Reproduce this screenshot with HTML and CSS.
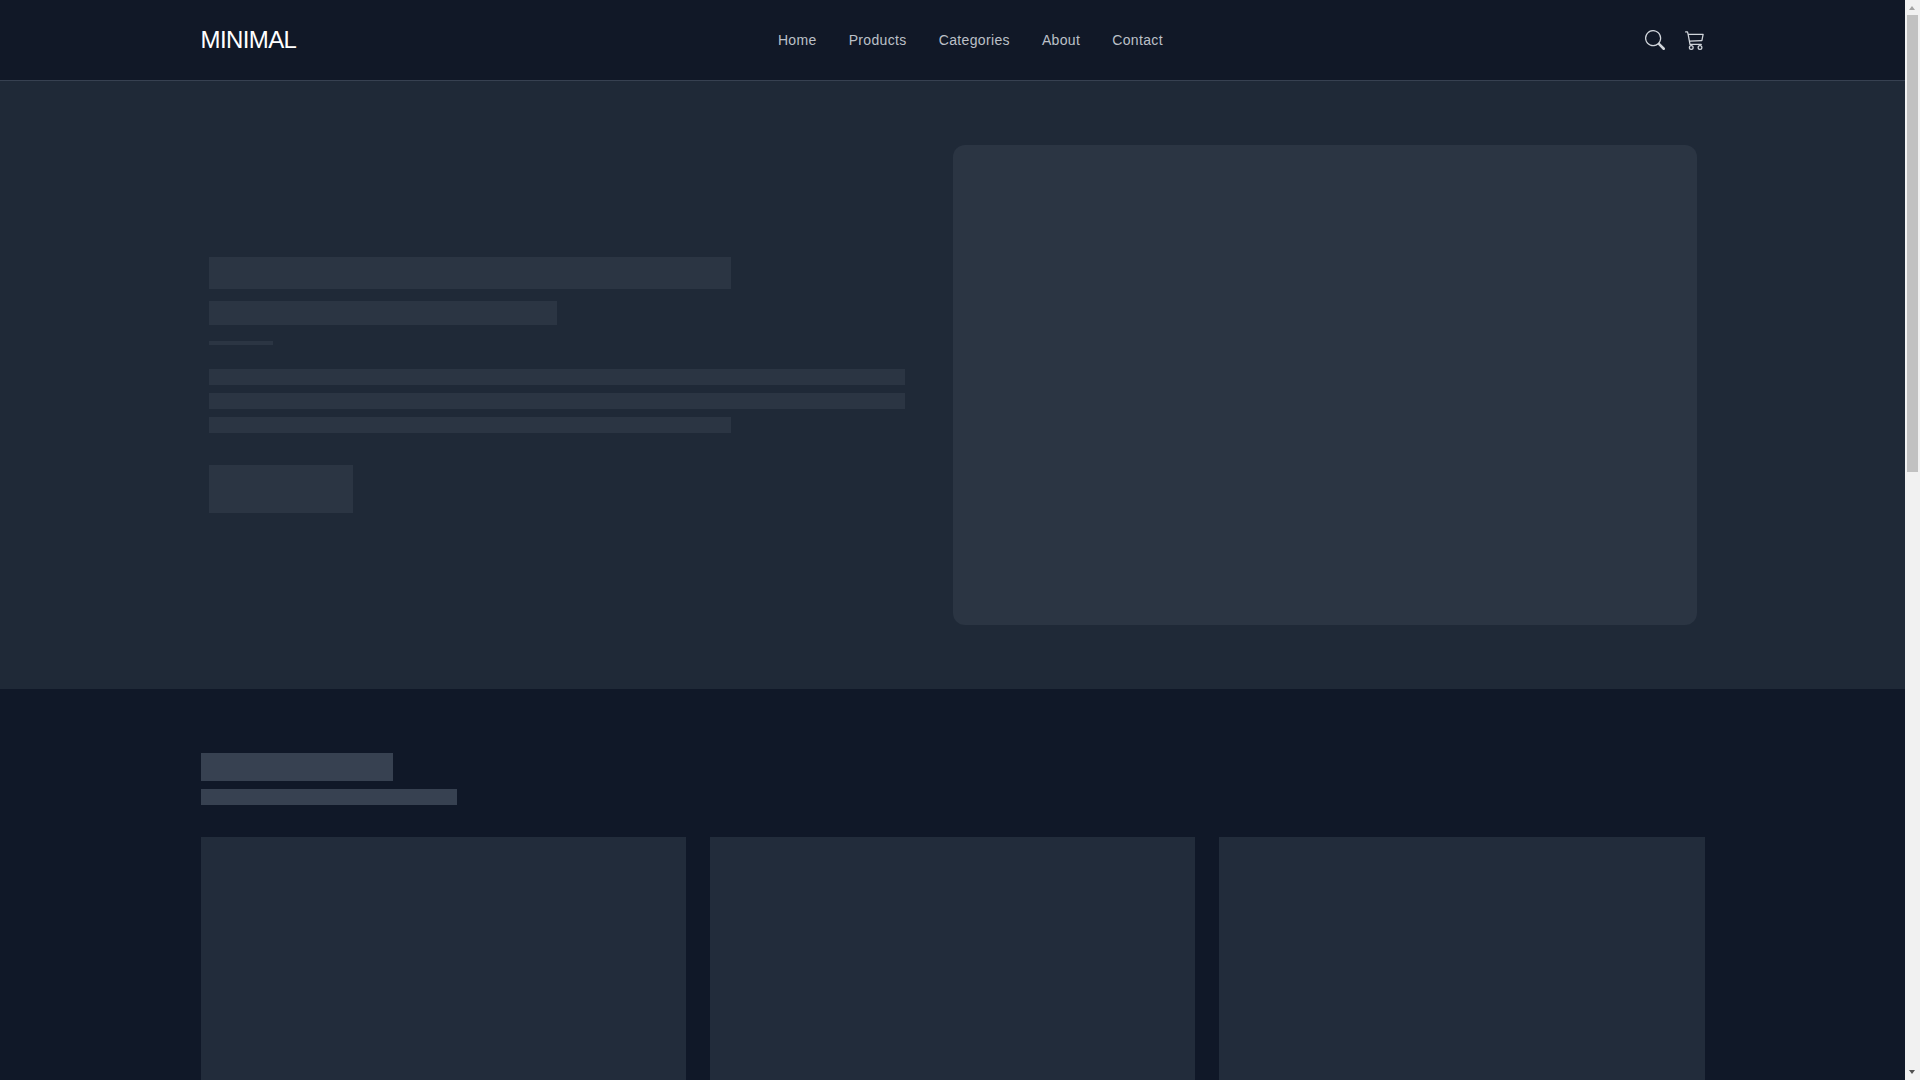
FILE: index.html
```html
<!DOCTYPE html>
<html lang="en">
<head>
  <meta charset="UTF-8" />
  <meta name="viewport" content="width=device-width, initial-scale=1.0"/>
  <title>Minimal</title>
  <link rel="stylesheet" href="styles.css">
</head>
<body>
  <header class="site-header">
    <div class="container header-row">
      <a class="logo" href="#">MINIMAL</a>
      <nav class="main-nav">
        <a href="#">Home</a>
        <a href="#">Products</a>
        <a href="#">Categories</a>
        <a href="#">About</a>
        <a href="#">Contact</a>
      </nav>
      <div class="header-icons">
        <svg class="icon" viewBox="0 0 16 16" fill="currentColor" aria-label="Search">
          <path d="M11.742 10.344a6.5 6.5 0 1 0-1.397 1.398h-.001c.03.04.062.078.098.115l3.85 3.85a1 1 0 0 0 1.415-1.414l-3.85-3.85a1.007 1.007 0 0 0-.115-.1zM12 6.5a5.5 5.5 0 1 1-11 0 5.5 5.5 0 0 1 11 0z"/>
        </svg>
        <svg class="icon" viewBox="0 0 16 16" fill="currentColor" aria-label="Cart">
          <path d="M0 1.5A.5.5 0 0 1 .5 1H2a.5.5 0 0 1 .485.379L2.89 3H14.5a.5.5 0 0 1 .49.598l-1 5a.5.5 0 0 1-.465.401l-9.397.472L4.415 11H13a.5.5 0 0 1 0 1H4a.5.5 0 0 1-.491-.408L2.01 3.607 1.61 2H.5a.5.5 0 0 1-.5-.5zM3.102 4l.84 4.479 9.144-.459L13.89 4H3.102zM5 12a2 2 0 1 0 0 4 2 2 0 0 0 0-4zm7 0a2 2 0 1 0 0 4 2 2 0 0 0 0-4zm-7 1a1 1 0 1 1 0 2 1 1 0 0 1 0-2zm7 0a1 1 0 1 1 0 2 1 1 0 0 1 0-2z"/>
        </svg>
      </div>
    </div>
  </header>

  <section class="hero">
    <div class="container">
      <div class="hero-grid">
        <div class="hero-text">
          <div class="skel hero-title"></div>
          <div class="skel hero-subtitle"></div>
          <div class="skel hero-rule"></div>
          <div class="skel hero-line"></div>
          <div class="skel hero-line"></div>
          <div class="skel hero-line short"></div>
          <div class="skel hero-button"></div>
        </div>
        <div class="skel hero-image"></div>
      </div>
    </div>
  </section>

  <section class="products">
    <div class="container">
      <div class="skel section-title"></div>
      <div class="skel section-subtitle"></div>
      <div class="card-grid">
        <div class="card"></div>
        <div class="card"></div>
        <div class="card"></div>
        <div class="card"></div>
        <div class="card"></div>
        <div class="card"></div>
      </div>
    </div>
  </section>

  <section class="newsletter">
    <div class="container">
      <div class="skel section-title"></div>
      <div class="skel section-subtitle"></div>
    </div>
  </section>

  <footer class="site-footer"></footer>

  <div class="scrollbar">
    <span class="scroll-arrow up"></span>
    <span class="scroll-thumb"></span>
    <span class="scroll-arrow down"></span>
  </div>
</body>
</html>
```

FILE: styles.css
```css
body { margin: 0; padding-right: 15px; background-color: #111827; font-family: "Liberation Sans", Arial, sans-serif; }
.container { max-width: 1504px; margin: 0 auto; padding: 0 16px; }

.site-header { background-color: #111827; border-bottom: 1px solid #374151; }
.header-row { display: flex; justify-content: space-between; align-items: center; height: 80px; }
.logo { color: #fff; font-size: 24px; letter-spacing: -0.6px; text-decoration: none; }
.main-nav { display: flex; gap: 32px; }
.main-nav a { color: #bcc0c8; font-size: 14px; letter-spacing: 0.35px; text-decoration: none; }
.header-icons { display: flex; gap: 20px; color: #d1d5db; }
.icon { display: block; width: 20px; height: 20px; }

.skel { background-color: #2b3543; }

.hero { background-color: #1f2937; padding: 64px 0; }
.hero-grid { display: grid; grid-template-columns: 1fr 1fr; align-items: center; padding: 0 8px; }
.hero-text { padding-right: 48px; }
.hero-title { width: 75%; height: 32px; margin-bottom: 12px; }
.hero-subtitle { width: 50%; height: 24px; margin-bottom: 16px; }
.hero-rule { width: 64px; height: 4px; margin-bottom: 24px; }
.hero-line { height: 16px; margin-bottom: 8px; }
.hero-line.short { width: 75%; margin-bottom: 32px; }
.hero-button { width: 144px; height: 48px; }
.hero-image { height: 480px; border-radius: 12px; }

.products { background-color: #101828; padding: 64px 0; }
.products .skel, .newsletter .skel { background-color: #374151; }
.section-title { width: 192px; height: 28px; margin-bottom: 8px; }
.section-subtitle { width: 256px; height: 16px; }
.card-grid { display: grid; grid-template-columns: repeat(3, 1fr); gap: 24px; margin-top: 32px; }
.card { height: 420px; background-color: #222c3b; }

.newsletter { background-color: #1f2937; padding: 64px 0; }
.site-footer { height: 260px; background-color: #111827; border-top: 1px solid #374151; }

/* window scrollbar from the screenshot, the headless browser hides its own */
.scrollbar { position: fixed; top: 0; right: 0; bottom: 0; width: 15px; background-color: #f1f1f1; }
.scroll-thumb { position: absolute; top: 15px; left: 2px; width: 11px; height: 457px; background-color: #c1c1c1; }
.scroll-arrow { position: absolute; left: 4px; width: 0; height: 0; border-left: 3.5px solid transparent; border-right: 3.5px solid transparent; }
.scroll-arrow.up { top: 6px; border-bottom: 4px solid #a3a3a3; }
.scroll-arrow.down { bottom: 6px; border-top: 4px solid #505050; }
```
